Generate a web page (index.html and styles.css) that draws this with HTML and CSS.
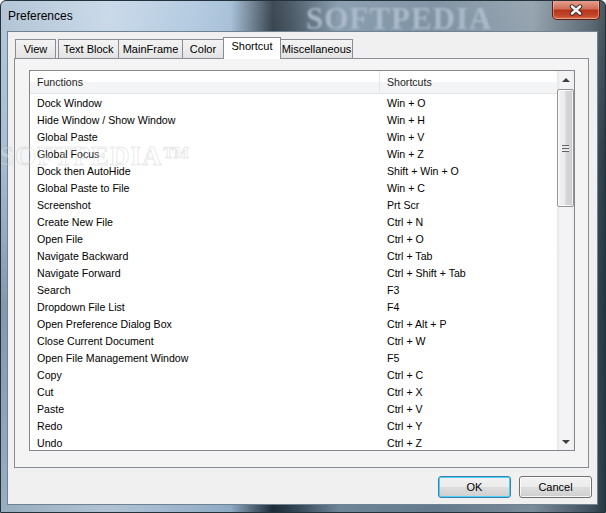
FILE: index.html
```html
<!DOCTYPE html>
<html>
<head>
<meta name="viewport" content="width=device-width, initial-scale=1.0">
<title>Preferences</title>
<link rel="stylesheet" href="styles.css">
</head>
<body>

<div class="window">
  <div class="titlebar">
    <span class="title">Preferences</span>
    <span class="glass-mark">SOFTPEDIA</span>
    <button class="close" type="button" title="Close">
      <svg width="16" height="12" viewBox="0 0 16 12">
        <path d="M4 2.5 L12 9.5 M12 2.5 L4 9.5" stroke="#3a2a2a" stroke-width="4.4" stroke-linecap="round"/>
        <path d="M4 2.5 L12 9.5 M12 2.5 L4 9.5" stroke="#f4f4f4" stroke-width="2.6" stroke-linecap="round"/>
      </svg>
    </button>
  </div>

  <div class="client">
    <div class="tabs">
      <div class="tab tab-view">View</div>
      <div class="tab tab-text">Text Block</div>
      <div class="tab tab-main">MainFrame</div>
      <div class="tab tab-color">Color</div>
      <div class="tab tab-short active">Shortcut</div>
      <div class="tab tab-misc">Miscellaneous</div>
    </div>

    <div class="panel">
      <div class="listview">
        <div class="list-cols">
          <div class="list-head">
            <div class="col-fn">Functions</div>
            <div class="col-sc">Shortcuts</div>
          </div>
          <div class="row"><div class="col-fn">Dock Window</div><div class="col-sc">Win + O</div></div>
          <div class="row"><div class="col-fn">Hide Window / Show Window</div><div class="col-sc">Win + H</div></div>
          <div class="row"><div class="col-fn">Global Paste</div><div class="col-sc">Win + V</div></div>
          <div class="row"><div class="col-fn">Global Focus</div><div class="col-sc">Win + Z</div></div>
          <div class="row"><div class="col-fn">Dock then AutoHide</div><div class="col-sc">Shift + Win + O</div></div>
          <div class="row"><div class="col-fn">Global Paste to File</div><div class="col-sc">Win + C</div></div>
          <div class="row"><div class="col-fn">Screenshot</div><div class="col-sc">Prt Scr</div></div>
          <div class="row"><div class="col-fn">Create New File</div><div class="col-sc">Ctrl + N</div></div>
          <div class="row"><div class="col-fn">Open File</div><div class="col-sc">Ctrl + O</div></div>
          <div class="row"><div class="col-fn">Navigate Backward</div><div class="col-sc">Ctrl + Tab</div></div>
          <div class="row"><div class="col-fn">Navigate Forward</div><div class="col-sc">Ctrl + Shift + Tab</div></div>
          <div class="row"><div class="col-fn">Search</div><div class="col-sc">F3</div></div>
          <div class="row"><div class="col-fn">Dropdown File List</div><div class="col-sc">F4</div></div>
          <div class="row"><div class="col-fn">Open Preference Dialog Box</div><div class="col-sc">Ctrl + Alt + P</div></div>
          <div class="row"><div class="col-fn">Close Current Document</div><div class="col-sc">Ctrl + W</div></div>
          <div class="row"><div class="col-fn">Open File Management Window</div><div class="col-sc">F5</div></div>
          <div class="row"><div class="col-fn">Copy</div><div class="col-sc">Ctrl + C</div></div>
          <div class="row"><div class="col-fn">Cut</div><div class="col-sc">Ctrl + X</div></div>
          <div class="row"><div class="col-fn">Paste</div><div class="col-sc">Ctrl + V</div></div>
          <div class="row"><div class="col-fn">Redo</div><div class="col-sc">Ctrl + Y</div></div>
          <div class="row"><div class="col-fn">Undo</div><div class="col-sc">Ctrl + Z</div></div>
        </div>

        <div class="vscroll">
          <div class="sb-arrow"><span class="tri-up"></span></div>
          <div class="sb-track">
            <div class="sb-thumb"><span class="grip"></span></div>
          </div>
          <div class="sb-arrow"><span class="tri-down"></span></div>
        </div>
      </div>
    </div>

    <div class="buttons">
      <button class="btn btn-default" type="button">OK</button>
      <button class="btn" type="button">Cancel</button>
    </div>
  </div>

  <span class="watermark">SOFTPEDIA&trade;</span>
</div>

</body>
</html>
```

FILE: styles.css
```css
body {
  margin: 0;
  font-family: "Liberation Sans", Arial, sans-serif;
  font-size: 11px;
  background: #ffffff;
}

* {
  box-sizing: border-box;
}

.window {
  position: relative;
  width: 606px;
  height: 513px;
  display: flex;
  flex-direction: column;
  padding: 0 7px 7px 6px;
  border: 1px solid #24323c;
  border-radius: 6px 6px 0 0;
  overflow: hidden;
  background:
    linear-gradient(180deg, rgba(255,255,255,0.15) 0%, rgba(0,0,0,0) 30%, rgba(20,40,55,0.25) 60%, rgba(20,40,55,0.1) 100%),
    linear-gradient(90deg, #a8bdd0 0%, #c2d4e6 18%, #a9c3dc 32%, #9cb8d2 38%, #1f2c38 45%, #30414f 48%, #7890a4 56%, #6d8396 72%, #8797a4 88%, #43535f 98%, #2c3a44 100%);
}

/* title bar */
.titlebar {
  flex-shrink: 0;
  height: 30px;
  display: flex;
  align-items: flex-start;
  margin: 0 -7px 0 -6px;
  padding-left: 7px;
}

.title {
  font-family: "Liberation Sans", Arial, sans-serif;
  font-size: 12px;
  color: #000;
  margin-top: 8px;
}

.glass-mark {
  position: absolute;
  left: 305px;
  top: 0;
  font-family: "Liberation Serif", serif;
  font-weight: bold;
  font-size: 31px;
  letter-spacing: 1px;
  color: rgba(175, 190, 205, 0.9);
  filter: blur(1.2px);
}

.close {
  margin-left: auto;
  margin-right: 5px;
  margin-top: -1px;
  width: 48px;
  height: 20px;
  border: 1px solid #5a1f16;
  border-top: none;
  border-radius: 0 0 5px 5px;
  background: linear-gradient(180deg, #e8a493 0%, #d0705a 45%, #b8341a 55%, #c4492c 85%, #e07a55 100%);
  box-shadow: inset 0 0 0 1px rgba(255, 210, 190, 0.45);
  display: flex;
  align-items: center;
  justify-content: center;
  padding: 0;
}

/* client area */
.client {
  flex: 1;
  min-height: 0;
  display: flex;
  flex-direction: column;
  background: #f0f0f0;
  border: 1px solid #6f8392;
  padding: 5px 8px 5px 6px;
}

.tabs {
  flex-shrink: 0;
  display: flex;
  align-items: flex-end;
  height: 21px;
  padding-left: 1px;
}

.tab {
  height: 19px;
  border: 1px solid #898c95;
  border-bottom: none;
  margin-right: -1px;
  background: linear-gradient(180deg, #f3f3f3 0%, #ececec 50%, #e2e2e2 100%);
  line-height: 19px;
  text-align: center;
  color: #000;
}

.tab-view { width: 41px; margin-right: 2px; }
.tab-text { width: 61px; }
.tab-main { width: 65px; }
.tab-color { width: 42px; }
.tab-short { width: 58px; }
.tab-misc { width: 73px; }

.tab.active {
  position: relative;
  z-index: 1;
  height: 22px;
  margin-bottom: -1px;
  background: #ffffff;
  line-height: 17px;
}

.panel {
  flex-shrink: 0;
  height: 410px;
  border: 1px solid #898c95;
  background: #f4f4f4;
  padding: 11px 13px 16px 14px;
}

/* list view */
.listview {
  height: 381px;
  border: 1px solid #828790;
  background: #ffffff;
  display: flex;
  overflow: hidden;
}

.list-cols {
  flex: 1;
  font-size: 10.6px;
}

.list-head {
  display: flex;
  height: 23px;
  border-bottom: 1px solid #e5e5e5;
  background: linear-gradient(180deg, #ffffff 0%, #ffffff 50%, #f3f4f6 51%, #f3f4f6 100%);
  line-height: 22px;
  color: #1e1e1e;
  margin-bottom: 1px;
}

.list-head .col-fn {
  border-right: 1px solid #e3e5e8;
}

.row {
  display: flex;
  height: 17px;
  line-height: 17px;
  color: #000;
}

.col-fn {
  width: 350px;
  padding-left: 7px;
}

.col-sc {
  flex: 1;
  padding-left: 7px;
}

/* scrollbar */
.vscroll {
  width: 17px;
  display: flex;
  flex-direction: column;
  background: linear-gradient(90deg, #e6e6e6 0%, #f3f3f3 20%, #f3f3f3 80%, #ededed 100%);
}

.sb-arrow {
  height: 17px;
  display: flex;
  align-items: center;
  justify-content: center;
}

.tri-up {
  width: 0;
  height: 0;
  border-left: 4px solid transparent;
  border-right: 4px solid transparent;
  border-bottom: 4px solid #3f3f3f;
}

.tri-down {
  width: 0;
  height: 0;
  border-left: 4px solid transparent;
  border-right: 4px solid transparent;
  border-top: 4px solid #3f3f3f;
}

.sb-track {
  flex: 1;
  padding-top: 1px;
}

.sb-thumb {
  height: 118px;
  border: 1px solid #959595;
  border-radius: 2px;
  background: linear-gradient(90deg, #f2f2f2 0%, #ebebeb 45%, #d6d6d6 55%, #cdcdcd 100%);
  box-shadow: inset 0 0 0 1px rgba(255, 255, 255, 0.7);
  display: flex;
  align-items: center;
  justify-content: center;
}

.grip {
  width: 7px;
  height: 7px;
  background: repeating-linear-gradient(180deg, #646464 0px, #646464 1px, #e8e8e8 1px, #e8e8e8 3px);
}

/* buttons */
.buttons {
  flex-shrink: 0;
  display: flex;
  justify-content: flex-end;
  gap: 8px;
  margin-top: 8px;
  margin-right: -3px;
}

.btn {
  width: 73px;
  height: 22px;
  border: 1px solid #707070;
  border-radius: 3px;
  background: linear-gradient(180deg, #f2f2f2 0%, #ebebeb 50%, #dddddd 51%, #cfcfcf 100%);
  box-shadow: inset 0 0 0 1px rgba(255, 255, 255, 0.8);
  font-family: "Liberation Sans", Arial, sans-serif;
  font-size: 11px;
  color: #000;
  padding: 0;
}

.btn-default {
  border-color: #3c7fb1;
  box-shadow: inset 0 0 0 1px #48d0f7;
}

/* softpedia watermark over the dialog */
.watermark {
  position: absolute;
  left: -2px;
  top: 140px;
  font-family: "Liberation Serif", serif;
  font-weight: bold;
  font-size: 27px;
  letter-spacing: 1px;
  color: rgba(255, 255, 255, 0.25);
  -webkit-text-stroke: 1px rgba(160, 160, 160, 0.25);
  pointer-events: none;
}
```
